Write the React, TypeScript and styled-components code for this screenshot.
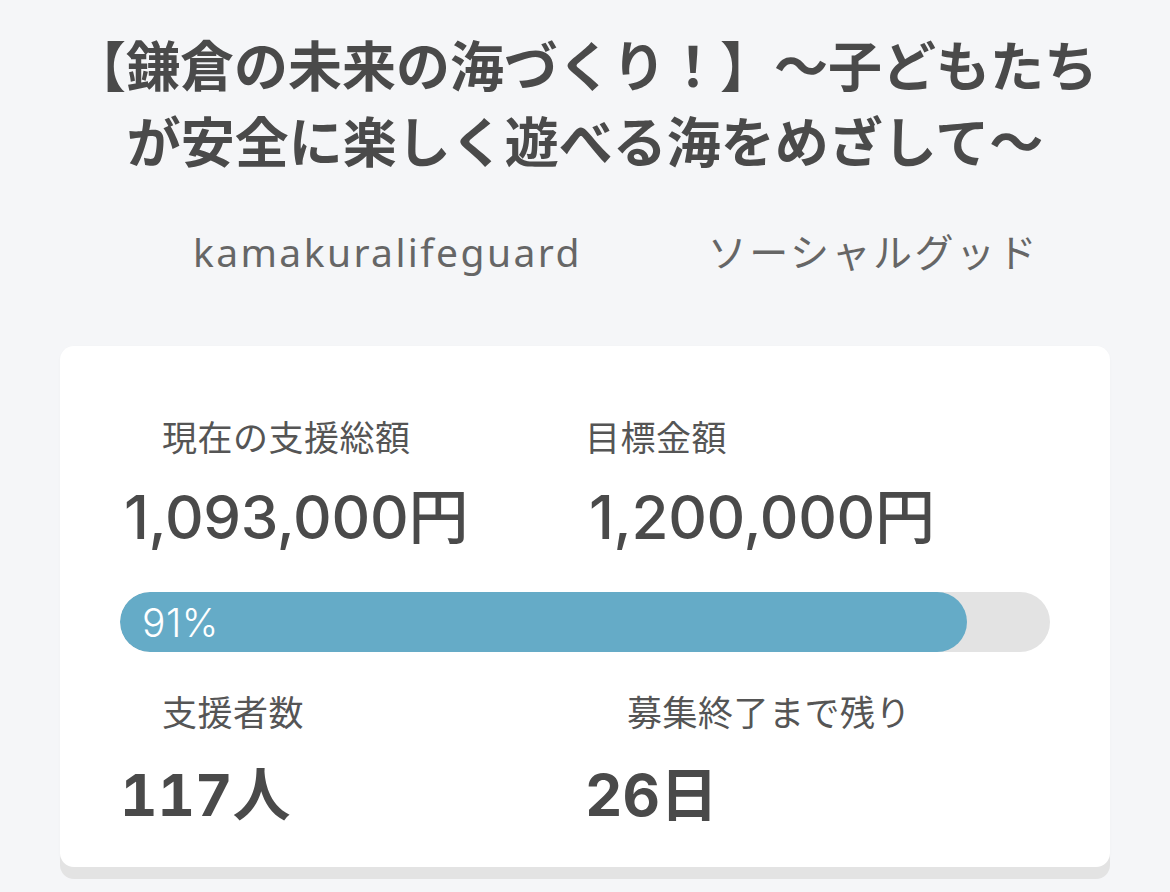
import React, { FC } from 'react';
import styled, { createGlobalStyle } from 'styled-components';

const GlobalStyle = createGlobalStyle`
    html, body {
        margin:0;
        padding:0;
        background-color:#f5f6f8;
    }
    body {
        font-family:"Liberation Sans", "Noto Sans CJK JP", sans-serif;
        color:#4a4a4a;
    }
`;

const Page = styled.div`
    box-sizing:border-box;
    width:1170px;
    min-height:892px;
    padding-top:26px;
    background-color:#f5f6f8;
`;

const Title = styled.h1`
    box-sizing:border-box;
    width:1050px;
    margin:0 auto;
    font-family:"Noto Sans CJK JP", sans-serif;
    font-size:54px;
    font-weight:700;
    line-height:76px;
    text-align:center;
    color:#4a4a4a;
`;

const MetaRow = styled.div`
    display:flex;
    align-items:center;
    gap:126px;
    margin-top:49px;
    padding-left:193px;
`;

const MetaItem = styled.span<{ $spacing: number }>`
    font-family:"Noto Sans", "Noto Sans CJK JP", sans-serif;
    font-size:39px;
    line-height:50px;
    letter-spacing:${p => p.$spacing}px;
    color:#666666;
`;

const Card = styled.section`
    box-sizing:border-box;
    margin:69px 60px 0 60px;
    padding:68px 60px 36px 60px;
    border-radius:14px;
    background-color:#ffffff;
    box-shadow:0px 12px 0px #e3e3e3, 0px 1px 3px rgba(0,0,0,0.03);
`;

const StatGrid = styled.div<{ $gap: number }>`
    display:grid;
    grid-template-columns:1fr 1fr;
    margin-top:${p => p.$gap}px;
`;

const Stat = styled.div`
    display:flex;
    flex-direction:column;
`;

const Label = styled.span<{ $indent: number }>`
    padding-left:${p => p.$indent}px;
    font-family:"Noto Sans CJK JP", sans-serif;
    font-size:35px;
    font-weight:400;
    line-height:44px;
    letter-spacing:0.5px;
    color:#555555;
`;

const Amount = styled.span`
    margin-top:23px;
    padding-left:4px;
    font-family:"Inter", "Noto Sans CJK JP", sans-serif;
    font-size:60px;
    font-weight:500;
    line-height:72px;
    letter-spacing:-0.3px;
    color:#4a4a4a;
`;

const Count = styled.span`
    margin-top:26px;
    font-family:"Inter", "Noto Sans CJK JP", sans-serif;
    font-size:58px;
    font-weight:700;
    line-height:72px;
    font-variant-numeric:tabular-nums;
    color:#4a4a4a;
`;

const Track = styled.div`
    height:60px;
    margin-top:39px;
    border-radius:30px;
    background-color:#e3e3e3;
    overflow:hidden;
`;

const Fill = styled.div`
    height:100%;
    border-radius:30px;
    background-color:#65abc7;
    display:flex;
    align-items:center;
    box-sizing:border-box;
    padding-left:22px;
`;

const Percent = styled.span`
    font-family:"Inter", sans-serif;
    font-size:39px;
    font-weight:300;
    letter-spacing:0.5px;
    color:#ffffff;
`;

interface IProgress {
    current:number;
    goal:number;
}

const Progress: FC<IProgress> = (props) => {
    const ratio = Math.min(props.current / props.goal, 1);
    const pct = Math.floor(ratio * 100);
    return(
        <Track>
            <Fill style={{ width: `${ratio * 100}%` }}>
                <Percent>{pct}%</Percent>
            </Fill>
        </Track>
    );
};

const yen = (n: number) => n.toLocaleString('en-US') + '円';

export const App: FC = () => {
    const current = 1093000;
    const goal = 1200000;
    return(
        <>
            <GlobalStyle/>
            <Page>
                <Title>
                    【鎌倉の未来の海づくり！】〜子どもたちが安全に楽しく遊べる海をめざして〜
                </Title>
                <MetaRow>
                    <MetaItem $spacing={2.4}>kamakuralifeguard</MetaItem>
                    <MetaItem $spacing={2.5}>ソーシャルグッド</MetaItem>
                </MetaRow>
                <Card>
                    <StatGrid $gap={0}>
                        <Stat>
                            <Label $indent={42}>現在の支援総額</Label>
                            <Amount>{yen(current)}</Amount>
                        </Stat>
                        <Stat>
                            <Label $indent={0}>目標金額</Label>
                            <Amount>{yen(goal)}</Amount>
                        </Stat>
                    </StatGrid>
                    <Progress current={current} goal={goal}/>
                    <StatGrid $gap={37}>
                        <Stat>
                            <Label $indent={42}>支援者数</Label>
                            <Count>117人</Count>
                        </Stat>
                        <Stat>
                            <Label $indent={42}>募集終了まで残り</Label>
                            <Count>26日</Count>
                        </Stat>
                    </StatGrid>
                </Card>
            </Page>
        </>
    );
};

export default App;
